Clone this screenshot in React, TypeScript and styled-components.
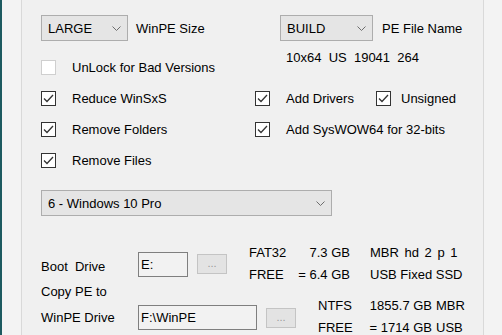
import styled, { createGlobalStyle } from 'styled-components';

const GlobalStyle = createGlobalStyle`
  html, body {
    margin: 0;
    padding: 0;
    background: #f0f0f0;
  }
  body {
    font-family: 'Liberation Sans', Arial, sans-serif;
    font-size: 13px;
    color: #000;
  }
`;

const Window = styled.div`
  display: flex;
  width: 502px;
  height: 335px;
  overflow: hidden;
  background: #f0f0f0;
`;

const EdgeStrip = styled.div`
  width: 2px;
  flex: none;
  background: #1d5a60;
`;

const Gutter = styled.div<{ $w: number }>`
  width: ${p => p.$w}px;
  flex: none;
  background: #f3f3f3;
`;

const GroupBox = styled.div`
  width: 442px;
  flex: none;
  border-left: 1px solid #d9d9d9;
  border-right: 1px solid #d9d9d9;
  padding: 15px 0 0 19px;
`;

const OptionsGrid = styled.div`
  display: grid;
  grid-template-columns: 214px 1fr;
  grid-template-rows: 37px repeat(4, 31px);
  align-items: center;
`;

const Field = styled.div<{ $pad?: number; $gap: number }>`
  display: flex;
  align-items: center;
  align-self: start;
  gap: ${p => p.$gap}px;
  padding-left: ${p => p.$pad ?? 0}px;
`;

const Combo = styled.div<{ $w: number; $top?: number }>`
  box-sizing: border-box;
  display: flex;
  align-items: center;
  justify-content: space-between;
  width: ${p => p.$w}px;
  height: 26px;
  margin-top: ${p => p.$top ?? 0}px;
  padding: 0 6px 0 6px;
  background: #e5e5e5;
  border: 1px solid #adadad;
`;

const BuildInfo = styled.div<{ $pad: number }>`
  align-self: start;
  margin-top: -2px;
  padding-left: ${p => p.$pad}px;
  line-height: 15px;
  white-space: pre;
`;

const CheckRow = styled.div`
  display: flex;
  align-items: center;
`;

const Check = styled.label<{ $gap?: number; $w?: number }>`
  display: flex;
  align-items: center;
  gap: ${p => p.$gap ?? 16}px;
  width: ${p => (p.$w ? `${p.$w}px` : 'auto')};
  white-space: nowrap;
`;

const Box = styled.span<{ $disabled?: boolean }>`
  box-sizing: border-box;
  display: flex;
  align-items: center;
  justify-content: center;
  width: 15px;
  height: 15px;
  flex: none;
  background: #fff;
  border: 1px solid ${p => (p.$disabled ? '#cfcfcf' : '#333333')};
`;

const DriveSection = styled.div`
  margin-top: 26px;
`;

const BootRow = styled.div`
  display: flex;
  align-items: center;
`;

const WinPERow = styled.div`
  display: flex;
  align-items: flex-start;
  margin-top: -4px;
`;

const DriveLabel = styled.div<{ $top?: number }>`
  width: 97px;
  flex: none;
  line-height: 20px;
  margin-top: ${p => p.$top ?? 0}px;
`;

const LabelColumn = styled.div`
  display: flex;
  flex-direction: column;
  width: 97px;
  flex: none;
`;

const TextBox = styled.div<{ $w: number; $top?: number }>`
  box-sizing: border-box;
  display: flex;
  align-items: center;
  width: ${p => p.$w}px;
  height: 25px;
  flex: none;
  margin-top: ${p => p.$top ?? 0}px;
  padding-left: 2px;
  background: #f2f2f2;
  border: 1px solid #7f7f7f;
`;

const BrowseButton = styled.button<{ $top?: number }>`
  box-sizing: border-box;
  width: 30px;
  height: 20px;
  flex: none;
  margin: ${p => p.$top ?? 0}px 0 0 9px;
  padding: 0 0 3px;
  background: #e3e3e3;
  border: 1px solid #c4c4c4;
  color: #9a9a9a;
  font: inherit;
  font-size: 11px;
  line-height: 14px;
  display: flex;
  align-items: flex-end;
  justify-content: center;
`;

// three columns: kind, size (right aligned), extra; gap only before the extra column
const InfoBlock = styled.div<{ $cols: string; $gap: number; $top?: number }>`
  display: grid;
  grid-template-columns: ${p => p.$cols};
  margin: ${p => p.$top ?? 0}px 0 0 22px;
  line-height: 22px;
  white-space: nowrap;

  & > :nth-child(3n) {
    padding-left: ${p => p.$gap}px;
  }
`;

const Value = styled.span`
  text-align: right;
`;

const Extra = styled.span<{ $spread?: number }>`
  word-spacing: ${p => p.$spread ?? 0}px;
`;

function Chevron() {
  return (
    <svg width="9" height="5" viewBox="0 0 9 5">
      <polyline points="0.5,0.5 4.5,4.5 8.5,0.5" fill="none" stroke="#6d6d6d" strokeWidth="1" />
    </svg>
  );
}

function Tick() {
  return (
    <svg width="11" height="9" viewBox="0 0 11 9">
      <polyline points="1,4.5 4,7.5 10,1" fill="none" stroke="#333" strokeWidth="1.3" />
    </svg>
  );
}

type CheckProps = { label: string; checked?: boolean; disabled?: boolean; gap?: number; w?: number };

function CheckBox({ label, checked, disabled, gap, w }: CheckProps) {
  return (
    <Check $gap={gap} $w={w}>
      <Box $disabled={disabled}>{checked && <Tick />}</Box>
      {label}
    </Check>
  );
}

export default function App() {
  return (
    <>
      <GlobalStyle />
      <Window>
        <EdgeStrip />
        <Gutter $w={19} />
        <GroupBox>
          <OptionsGrid>
            <Field $gap={8}>
              <Combo $w={87}>
                LARGE <Chevron />
              </Combo>
              WinPE Size
            </Field>
            <Field $gap={9} $pad={25}>
              <Combo $w={93}>
                BUILD <Chevron />
              </Combo>
              PE File Name
            </Field>

            <CheckBox label="UnLock for Bad Versions" disabled />
            <BuildInfo $pad={31}>{'10x64  US  19041  264'}</BuildInfo>

            <CheckBox label="Reduce WinSxS" checked />
            <CheckRow>
              <CheckBox label="Add Drivers" checked w={121} />
              <CheckBox label="Unsigned" checked gap={10} />
            </CheckRow>

            <CheckBox label="Remove Folders" checked />
            <CheckBox label="Add SysWOW64 for 32-bits" checked />

            <CheckBox label="Remove Files" checked />
          </OptionsGrid>

          <Combo $w={291} $top={14}>
            6 - Windows 10 Pro <Chevron />
          </Combo>

          <DriveSection>
            <BootRow>
              <DriveLabel $top={6}>Boot&nbsp; Drive</DriveLabel>
              <TextBox $w={50}>E:</TextBox>
              <BrowseButton>...</BrowseButton>
              <InfoBlock $cols="41px 60px auto" $gap={20}>
                <span>FAT32</span>
                <Value>7.3 GB</Value>
                <Extra $spread={2}>MBR hd 2 p 1</Extra>
                <span>FREE</span>
                <Value>= 6.4 GB</Value>
                <Extra>USB Fixed SSD</Extra>
              </InfoBlock>
            </BootRow>

            <WinPERow>
              <LabelColumn>
                <DriveLabel>Copy PE to</DriveLabel>
                <DriveLabel $top={6}>WinPE Drive</DriveLabel>
              </LabelColumn>
              <TextBox $w={119} $top={23}>F:\WinPE</TextBox>
              <BrowseButton $top={26}>...</BrowseButton>
              <InfoBlock $cols="35px 79px auto" $gap={4} $top={13}>
                <span>NTFS</span>
                <Value>1855.7 GB</Value>
                <Extra>MBR</Extra>
                <span>FREE</span>
                <Value>= 1714 GB</Value>
                <Extra>USB</Extra>
              </InfoBlock>
            </WinPERow>
          </DriveSection>
        </GroupBox>
        <Gutter $w={19} />
      </Window>
    </>
  );
}
